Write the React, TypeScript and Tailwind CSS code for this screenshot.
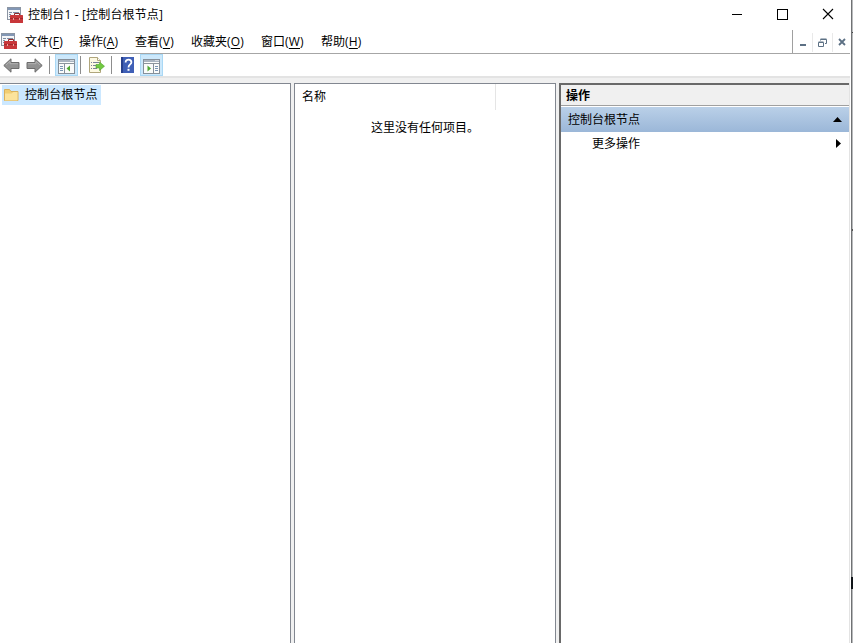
import type { ReactNode } from 'react'

const menus = [
  { label: '文件', hotkey: 'F', width: 'w-[54px]' },
  { label: '操作', hotkey: 'A', width: 'w-[56px]' },
  { label: '查看', hotkey: 'V', width: 'w-[56px]' },
  { label: '收藏夹', hotkey: 'O', width: 'w-[70px]' },
  { label: '窗口', hotkey: 'W', width: 'w-[60px]' },
  { label: '帮助', hotkey: 'H', width: 'w-[56px]' },
]

function ConsoleIcon() {
  return (
    <svg width="17" height="17" viewBox="0 0 17 17" className="shrink-0">
      <rect x="0.5" y="0.5" width="13" height="12" fill="#f4f6f8" stroke="#8b95a3" />
      <rect x="1" y="1" width="12" height="2" fill="#8297b5" />
      <path d="M2 5.5h3M6 5.5h6M2 7.5h2M2 9.5h1" stroke="#7e8da3" />
      <path d="M7.5 8V6.5h5V8" fill="none" stroke="#8f2b2b" />
      <rect x="3" y="8" width="13" height="8" rx="0.5" fill="#c8373a" />
      <path d="M3 11.5h13" stroke="#a3282c" />
      <path d="M6.5 11v2M12.5 11v2" stroke="#e9a09c" />
    </svg>
  )
}

function ArrowIcon({ flip = false }: { flip?: boolean }) {
  return (
    <svg width="17" height="15" viewBox="0 0 17 15" className={flip ? 'shrink-0 -scale-x-100' : 'shrink-0'}>
      <path d="M0.8 7.5 8 0.8v3.7h8v6H8v3.7z" fill="#929292" stroke="#6c6c6c" strokeLinejoin="round" />
      <path d="M3 7 7 3.3V5.7h8" fill="none" stroke="#b2b2b2" />
    </svg>
  )
}

function PaneIcon({ side }: { side: 'left' | 'right' }) {
  return (
    <svg width="17" height="15" viewBox="0 0 17 15">
      <rect x="0.5" y="0.5" width="16" height="14" fill="#fafbfa" stroke="#86909a" />
      <rect x="1" y="1" width="15" height="2" fill="#a9b4c0" />
      <path d="M12.5 1.5h1M14.5 1.5h1" stroke="#fff" />
      <path d="M1 4.5h15" stroke="#8c959d" />
      {side === 'left' ? (
        <>
          <path d="M6.5 5v10" stroke="#86909a" />
          <path d="M2 7.5h3M2 9.5h3M2 11.5h3" stroke="#7995b4" />
          <path d="M12 6.5v6L8.5 9.5z" fill="#4fa832" />
        </>
      ) : (
        <>
          <path d="M10.5 5v10" stroke="#86909a" />
          <path d="M12 7.5h3M12 9.5h3M12 11.5h3" stroke="#7995b4" />
          <path d="M4.5 6.5v6L8 9.5z" fill="#4fa832" />
        </>
      )}
    </svg>
  )
}

function ExportIcon() {
  return (
    <svg width="17" height="17" viewBox="0 0 17 17" className="shrink-0">
      <path d="M1.5 0.5h8l3 3v12h-11z" fill="#fdf9e2" stroke="#b0a67c" />
      <path d="M9.5 0.5v3h3" fill="#fff" stroke="#b0a67c" />
      <path d="M3 5.5h1M5 5.5h6M3 8.5h1M5 8.5h4M3 11.5h1M5 11.5h4" stroke="#7b8299" />
      <path d="M8 7.5h3.5V5L16.5 9.2l-5 4.3V11H8z" fill="#73c941" stroke="#4ba52b" strokeWidth="0.6" />
    </svg>
  )
}

function HelpIcon() {
  return (
    <svg width="13" height="16" viewBox="0 0 13 16" className="shrink-0">
      <rect width="13" height="16" fill="#3f5fb6" />
      <rect width="2" height="16" fill="#27408d" />
      <path d="M4.6 5.4c0-3.8 5.8-3.4 5.8-.2 0 2.3-2.9 2.2-2.9 5.2" fill="none" stroke="#fff" strokeWidth="1.8" />
      <rect x="6.5" y="11.8" width="2" height="2" fill="#fff" />
    </svg>
  )
}

function FolderIcon() {
  return (
    <svg width="15" height="14" viewBox="0 0 15 14" className="shrink-0">
      <path d="M0.5 12.5v-11h5l1.5 2h7v9z" fill="#f1ce73" stroke="#d9b05c" />
      <path d="M1 5.5h6.5l2-1.5h4v8.5H1z" fill="#fce39b" />
    </svg>
  )
}

function ToolButton({ children }: { children: ReactNode }) {
  return (
    <button className="flex h-[22px] w-[23px] shrink-0 items-center justify-center border border-[#a9d8f5] bg-[#cce8fb] pt-[3px]">
      {children}
    </button>
  )
}

function Separator() {
  return <div className="h-[18px] w-px shrink-0 bg-[#8d8d8d]" />
}

function TitleBar() {
  return (
    <header className="flex h-[30px] shrink-0 items-center pl-[7px]">
      <ConsoleIcon />
      <h1 className="ml-1 whitespace-pre tracking-[0.15px]">控制台1 - [控制台根节点]</h1>
      <div className="ml-auto flex items-center pr-4 pb-0.5">
        <svg width="102" height="12" viewBox="0 0 102 12" fill="none" stroke="#000">
          <path d="M0 6.5h10" />
          <rect x="45.5" y="1.5" width="10" height="10" />
          <path d="m91 1 10 10M101 1 91 11" strokeWidth="1.1" />
        </svg>
      </div>
    </header>
  )
}

function MenuBar() {
  return (
    <nav className="flex h-6 shrink-0 items-center border-b border-[#a6a6a6] pl-px">
      <ConsoleIcon />
      <div className="ml-[7px] flex pt-px">
        {menus.map(menu => (
          <div key={menu.label} className={`${menu.width} whitespace-nowrap`}>
            {menu.label}
            <span className="tracking-[0.2px]">
              (<span className="underline underline-offset-2">{menu.hotkey}</span>)
            </span>
          </div>
        ))}
      </div>
      <div className="ml-auto flex h-full items-center border-l border-[#a0a0a0] pt-px">
        <div className="flex h-[19px] w-5 items-center justify-center border-r border-[#e9e9e9]">
          <svg width="6" height="9" viewBox="0 0 6 9"><path d="M0 7h6" stroke="#5c7084" strokeWidth="2" /></svg>
        </div>
        <div className="flex h-[19px] w-5 items-center justify-center border-r border-[#e9e9e9]">
          <svg width="9" height="9" viewBox="0 0 9 9" fill="none" stroke="#5c7084">
            <path d="M2.5 2.5v-1h6v4H7M2.5 1h6M0.5 4.5h5v4h-5zM0.5 4h5" />
          </svg>
        </div>
        <div className="flex h-[19px] w-[17px] items-center justify-center">
          <svg width="8" height="8" viewBox="0 0 8 8"><path d="m1 1 6 6M7 1 1 7" stroke="#5c7084" strokeWidth="1.8" /></svg>
        </div>
      </div>
    </nav>
  )
}

function Toolbar() {
  return (
    <div className="flex h-[22px] shrink-0 items-center pl-[3px]">
      <ArrowIcon />
      <div className="w-1.5" />
      <ArrowIcon flip />
      <div className="w-1.5" />
      <Separator />
      <div className="w-[5px]" />
      <ToolButton><PaneIcon side="left" /></ToolButton>
      <div className="w-0.5" />
      <Separator />
      <div className="w-[7px]" />
      <ExportIcon />
      <div className="w-1.5" />
      <Separator />
      <div className="w-[9px]" />
      <HelpIcon />
      <div className="w-1.5" />
      <ToolButton><PaneIcon side="right" /></ToolButton>
    </div>
  )
}

export default function App() {
  return (
    <div className="flex h-[643px] w-[853px] overflow-hidden bg-white font-['Open_Sans','Noto_Sans_CJK_SC',sans-serif] text-[12px] leading-4 text-black">
      <div className="flex w-[850px] flex-col">
        <TitleBar />
        <MenuBar />
        <Toolbar />
        <div className="h-[7px] shrink-0 border-t-2 border-[#e3e3e3] bg-[#f0f0f0]" />
        <main className="flex min-h-0 flex-1">
          <div className="flex flex-1 bg-[#f0f0f0]">
            <section className="w-[291px] border-t border-r border-[#828790] bg-white pt-px">
              <div className="ml-0.5 flex h-5 w-[99px] items-center bg-[#cce8ff] pl-0.5">
                <FolderIcon />
                <span className="ml-1.5 whitespace-nowrap tracking-[0.1px]">控制台根节点</span>
              </div>
            </section>

            <section className="ml-[3px] w-[262px] border border-b-0 border-[#828790] bg-white">
              <div className="flex h-[26px] w-[201px] items-center border-r border-[#e5e5e5] pl-[7px]">名称</div>
              <p className="mt-2.5 text-center">这里没有任何项目。</p>
            </section>

            <section className="ml-[3px] flex-1 border-t-2 border-l-2 border-[#696969] bg-white">
              <h2 className="flex h-[21px] items-center border-b border-[#a0a0a0] bg-[#f0f0f0] pt-0.5 pl-[5px] font-bold">操作</h2>
              <div className="mt-px flex h-[25px] items-center justify-between bg-linear-to-b from-[#bad0e8] to-[#9bb7d8] pr-[7px] pl-[7px]">
                <span>控制台根节点</span>
                <svg width="9" height="5" viewBox="0 0 9 5"><path d="M0 5 4.5 0 9 5z" /></svg>
              </div>
              <div className="flex h-[23px] items-center justify-between pr-2 pl-[31px]">
                <span>更多操作</span>
                <svg width="5" height="9" viewBox="0 0 5 9"><path d="m0 0 5 4.5L0 9z" /></svg>
              </div>
            </section>
          </div>
          <div className="w-px bg-[#e3e3e3]" />
        </main>
      </div>
      <div className="relative ml-px w-0.5 border-l border-[#707274] bg-[#b9bbbd]">
        <div className="absolute top-[32px] right-0 h-px w-px bg-[#444]" />
        <div className="absolute top-[229px] right-0 h-0.5 w-px bg-[#555]" />
        <div className="absolute top-[577px] right-0 h-3 w-0.5 bg-[#101418]" />
      </div>
    </div>
  )
}
